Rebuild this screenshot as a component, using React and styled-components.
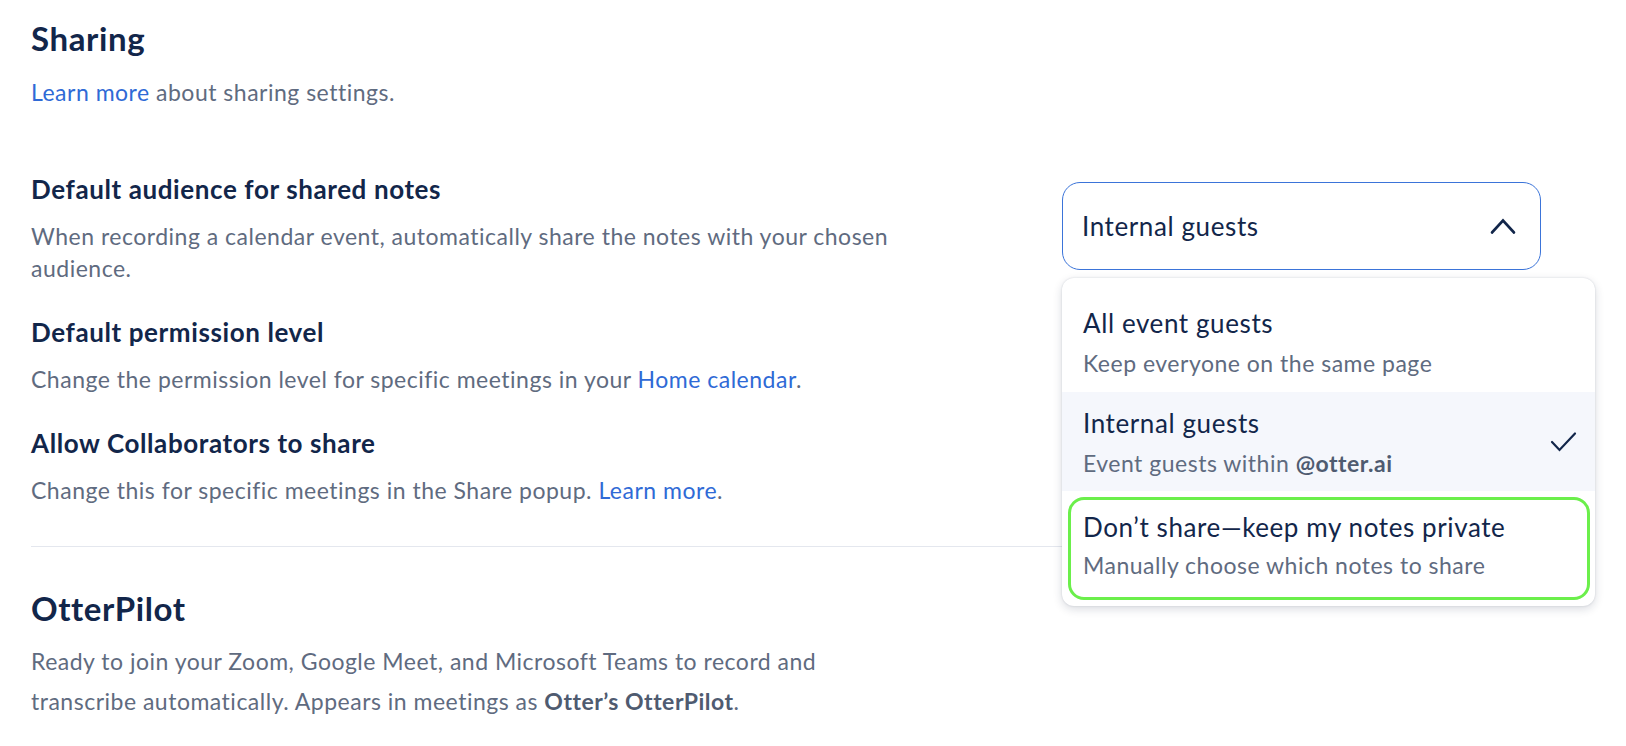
import React from "react";
import styled, { createGlobalStyle } from "styled-components";

const Global = createGlobalStyle`
  html, body { margin: 0; padding: 0; background: #ffffff; }
  body { font-family: Lato, "Noto Sans", sans-serif; -webkit-font-smoothing: antialiased; }
  * { box-sizing: border-box; }
`;

const Page = styled.div`
  width: 1626px;
  height: 746px;
  overflow: hidden;
  padding: 18px 31px 0 31px;
`;

const SectionTitle = styled.h2`
  margin: 0;
  font-size: 33px;
  line-height: 40px;
  letter-spacing: 0.6px;
  font-weight: 700;
  color: #12264a;
`;

const Intro = styled.p`
  margin: 18px 0 0 0;
  font-size: 23px;
  line-height: 32px;
  letter-spacing: 0.5px;
  color: #5f6b80;
`;

const Link = styled.a`
  color: #2f6ad6;
  text-decoration: none;
`;

const Settings = styled.div`
  display: flex;
  flex-direction: column;
  gap: 32px;
  margin-top: 65px;
`;

const Row = styled.div`
  display: flex;
  justify-content: space-between;
  align-items: flex-start;
`;

const RowText = styled.div`
  width: 880px;
  display: flex;
  flex-direction: column;
  gap: 15px;
`;

const RowTitle = styled.div`
  font-size: 26px;
  line-height: 32px;
  letter-spacing: 0.6px;
  font-weight: 700;
  color: #12264a;
`;

const RowDesc = styled.div`
  font-size: 23px;
  line-height: 32px;
  letter-spacing: 0.5px;
  color: #5f6b80;
`;

const SelectWrap = styled.div`
  position: relative;
  width: 479px;
  margin-top: 9px;
  margin-right: 54px;
`;

const SelectBox = styled.div`
  height: 88px;
  border: 1.5px solid #3b74d9;
  border-radius: 18px;
  display: flex;
  align-items: center;
  justify-content: space-between;
  padding: 0 24px 0 19px;
  font-size: 26px;
  letter-spacing: 0.6px;
  color: #12264a;
`;

const Menu = styled.div`
  position: absolute;
  top: 96px;
  left: 0;
  width: 533px;
  background: #ffffff;
  border-radius: 12px;
  box-shadow: 0 3px 10px rgba(20, 30, 60, 0.16), 0 0 2px rgba(20, 30, 60, 0.16);
  padding: 14px 0 6px 0;
  display: flex;
  flex-direction: column;
  z-index: 2;
`;

const Option = styled.div`
  padding: 15px 18px 14px 21px;
  background: ${(p) => (p.$selected ? "#f5f7fc" : "transparent")};
  display: flex;
  align-items: center;
  justify-content: space-between;
`;

const FirstOption = styled(Option)`
  padding-top: 15px;
  padding-bottom: 15px;
`;

const HighlightOption = styled(Option)`
  margin: 6px 5px 0 6px;
  padding: 11px 12px 18px 12px;
  border: 3px solid #6bef4b;
  border-radius: 16px;
`;

const OptionText = styled.div`
  display: flex;
  flex-direction: column;
  gap: ${(p) => p.$gap || "10px"};
`;

const OptionTitle = styled.div`
  font-size: 26px;
  line-height: 32px;
  letter-spacing: 0.6px;
  color: #12264a;
`;

const OptionSub = styled.div`
  font-size: 23px;
  line-height: 28px;
  letter-spacing: 0.5px;
  color: #5f6b80;
  b { font-weight: 700; color: #4f5b70; }
`;

const Divider = styled.hr`
  margin: 40px 0 0 0;
  border: none;
  border-top: 1px solid #e4e7ee;
`;

const Pilot = styled.div`
  margin-top: 41px;
`;

const PilotDesc = styled.p`
  margin: 13px 0 0 0;
  width: 830px;
  font-size: 23px;
  line-height: 40px;
  letter-spacing: 0.5px;
  color: #5f6b80;
  b { font-weight: 700; color: #4f5b70; }
`;

const ChevronUp = () => (
  <svg width="26" height="18" viewBox="0 0 26 18" fill="none">
    <path d="M2 15.5 L13 3.5 L24 15.5" stroke="#12264a" strokeWidth="2.6" strokeLinecap="round" strokeLinejoin="miter" />
  </svg>
);

const Check = () => (
  <svg width="27" height="22" viewBox="0 0 27 22" fill="none">
    <path d="M2 11 L9.5 19 L25 2.5" stroke="#12264a" strokeWidth="2.2" strokeLinecap="round" strokeLinejoin="miter" />
  </svg>
);

export default function App() {
  return (
    <>
      <Global />
      <Page>
        <SectionTitle>Sharing</SectionTitle>
        <Intro>
          <Link href="#">Learn more</Link> about sharing settings.
        </Intro>
        <Settings>
          <Row>
            <RowText>
              <RowTitle>Default audience for shared notes</RowTitle>
              <RowDesc>
                When recording a calendar event, automatically share the notes with your chosen audience.
              </RowDesc>
            </RowText>
            <SelectWrap>
              <SelectBox>
                <span>Internal guests</span>
                <ChevronUp />
              </SelectBox>
              <Menu>
                <FirstOption>
                  <OptionText>
                    <OptionTitle>All event guests</OptionTitle>
                    <OptionSub>Keep everyone on the same page</OptionSub>
                  </OptionText>
                </FirstOption>
                <Option $selected>
                  <OptionText>
                    <OptionTitle>Internal guests</OptionTitle>
                    <OptionSub>
                      Event guests within <b>@otter.ai</b>
                    </OptionSub>
                  </OptionText>
                  <Check />
                </Option>
                <HighlightOption>
                  <OptionText $gap="8px">
                    <OptionTitle>Don’t share—keep my notes private</OptionTitle>
                    <OptionSub>Manually choose which notes to share</OptionSub>
                  </OptionText>
                </HighlightOption>
              </Menu>
            </SelectWrap>
          </Row>
          <Row>
            <RowText>
              <RowTitle>Default permission level</RowTitle>
              <RowDesc>
                Change the permission level for specific meetings in your <Link href="#">Home calendar</Link>.
              </RowDesc>
            </RowText>
          </Row>
          <Row>
            <RowText>
              <RowTitle>Allow Collaborators to share</RowTitle>
              <RowDesc>
                Change this for specific meetings in the Share popup. <Link href="#">Learn more</Link>.
              </RowDesc>
            </RowText>
          </Row>
        </Settings>
        <Divider />
        <Pilot>
          <SectionTitle>OtterPilot</SectionTitle>
          <PilotDesc>
            Ready to join your Zoom, Google Meet, and Microsoft Teams to record and transcribe automatically. Appears in meetings as <b>Otter’s OtterPilot</b>.
          </PilotDesc>
        </Pilot>
      </Page>
    </>
  );
}
